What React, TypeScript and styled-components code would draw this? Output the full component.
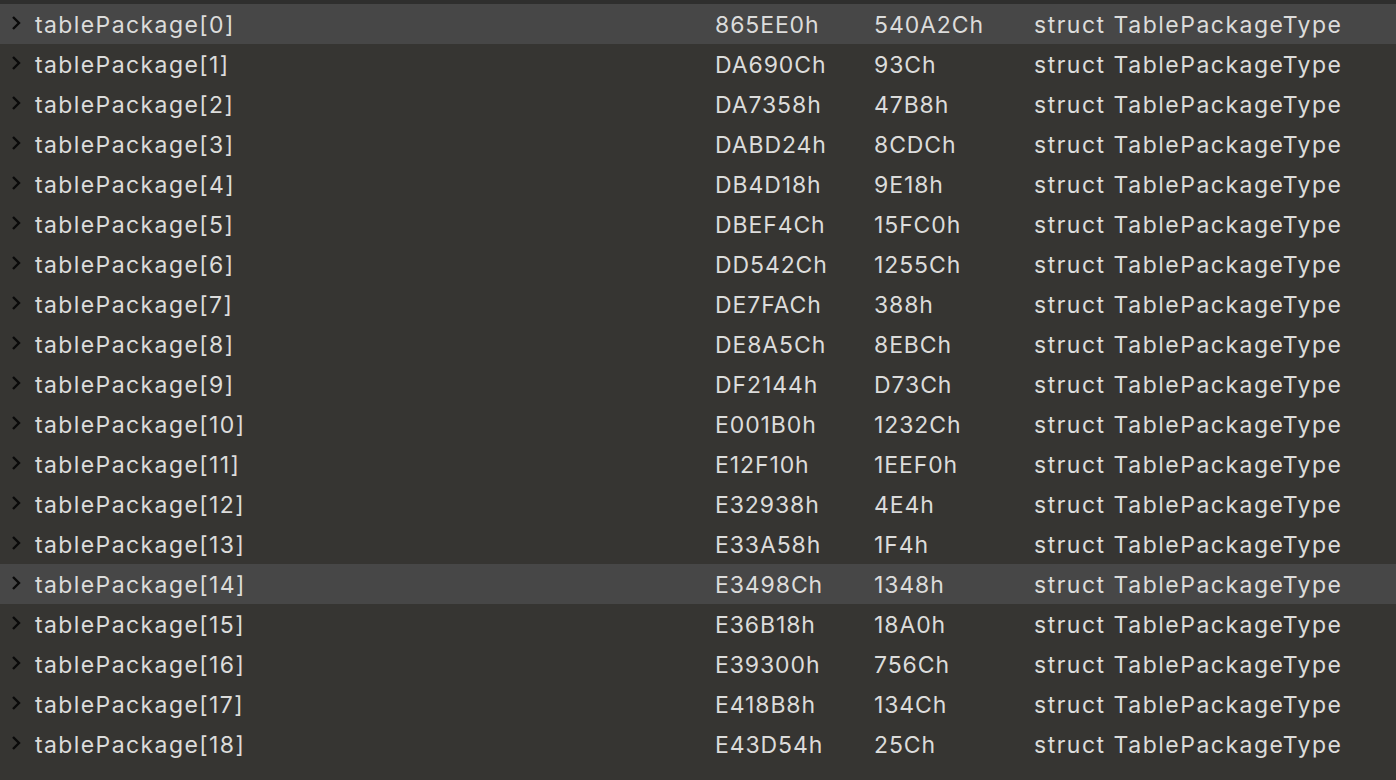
import React from "react";
import styled, { createGlobalStyle } from "styled-components";

const Global = createGlobalStyle`
  html, body { margin: 0; padding: 0; background: #363532; }
  body { font-family: Inter, "Noto Sans", sans-serif; }
`;

const Panel = styled.div`
  width: 1396px;
  height: 780px;
  background: #363532;
  border-top: 4px solid #2f2f2e;
  box-sizing: border-box;
  overflow: hidden;
`;

const Row = styled.div<{ $selected?: boolean }>`
  display: grid;
  grid-template-columns: 35px 680px 159px 160px 1fr;
  align-items: center;
  height: 40px;
  box-sizing: border-box;
  padding-top: 2px;
  background: ${(p) => (p.$selected ? "#474747" : "transparent")};
  color: #dcdcdb;
  font-size: 23px;
`;

const Chevron = styled.svg`
  display: block;
  align-self: start;
  width: 11px;
  height: 16px;
  min-width: 11px;
  margin-left: 10px;
  margin-top: 9px;
  overflow: visible;
`;

const Name = styled.span`
  white-space: nowrap;
  letter-spacing: 1.4px;
`;

const Hex = styled.span`
  white-space: nowrap;
  letter-spacing: 0.9px;
`;

const TypeName = styled.span`
  white-space: nowrap;
  letter-spacing: 1.5px;
`;

const rows: [string, string, string][] = [
  ["865EE0h", "540A2Ch", "0"],
  ["DA690Ch", "93Ch", "1"],
  ["DA7358h", "47B8h", "2"],
  ["DABD24h", "8CDCh", "3"],
  ["DB4D18h", "9E18h", "4"],
  ["DBEF4Ch", "15FC0h", "5"],
  ["DD542Ch", "1255Ch", "6"],
  ["DE7FACh", "388h", "7"],
  ["DE8A5Ch", "8EBCh", "8"],
  ["DF2144h", "D73Ch", "9"],
  ["E001B0h", "1232Ch", "10"],
  ["E12F10h", "1EEF0h", "11"],
  ["E32938h", "4E4h", "12"],
  ["E33A58h", "1F4h", "13"],
  ["E3498Ch", "1348h", "14"],
  ["E36B18h", "18A0h", "15"],
  ["E39300h", "756Ch", "16"],
  ["E418B8h", "134Ch", "17"],
  ["E43D54h", "25Ch", "18"],
];

export default function App() {
  return (
    <>
      <Global />
      <Panel>
        {rows.map(([addr, size, idx]) => (
          <Row key={idx} $selected={idx === "0" || idx === "14"}>
            <Chevron viewBox="0 0 11 16" width="11" height="16">
              <path d="M3 2 L9 8 L3 14" fill="none" stroke="#0a0a0a" strokeWidth="2.4" />
            </Chevron>
            <Name>tablePackage[{idx}]</Name>
            <Hex>{addr}</Hex>
            <Hex>{size}</Hex>
            <TypeName>struct TablePackageType</TypeName>
          </Row>
        ))}
      </Panel>
    </>
  );
}
